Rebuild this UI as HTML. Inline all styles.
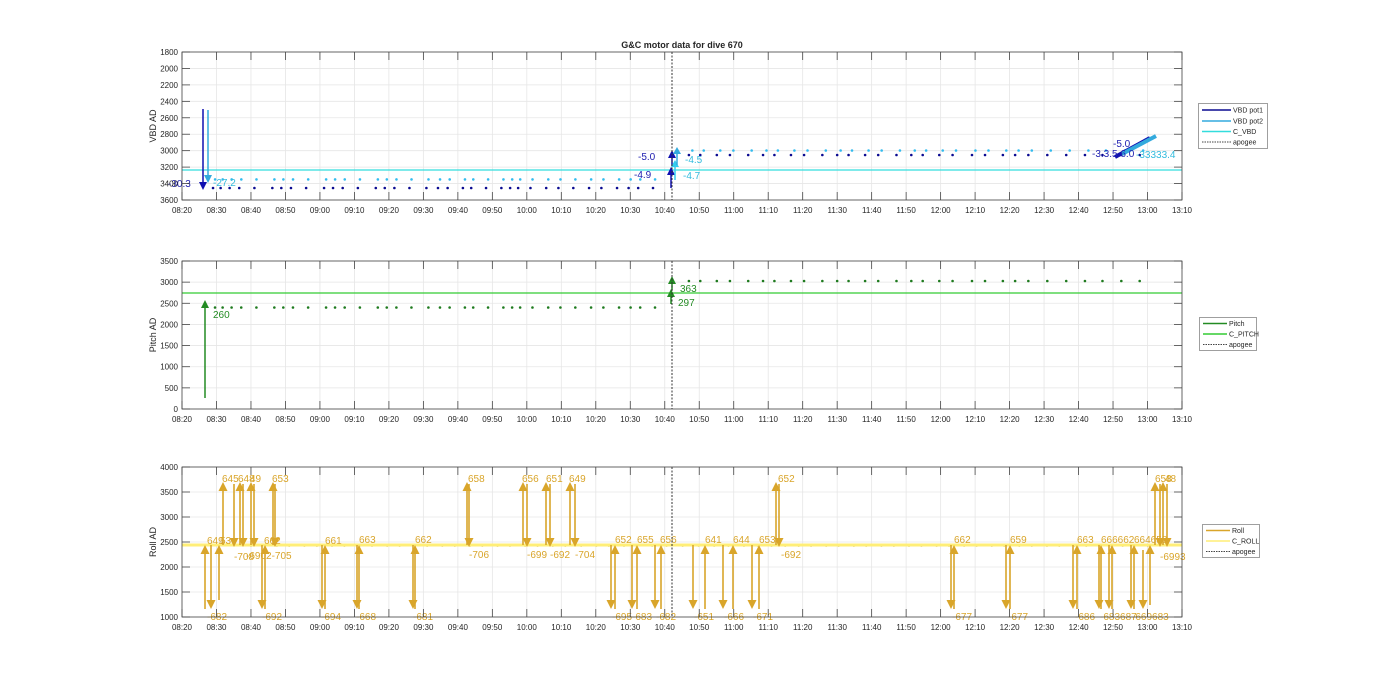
<!DOCTYPE html>
<html><head><meta charset="utf-8"><style>
html,body{margin:0;padding:0;background:#fff;}
svg{display:block;font-family:"Liberation Sans",sans-serif;}
.yl{font-size:8px;fill:#262626;text-anchor:end;}
.xl{font-size:8px;fill:#262626;text-anchor:middle;}
.ax{font-size:9px;fill:#262626;text-anchor:middle;}
.lg{font-size:7px;fill:#262626;}
.ro{font-size:10px;fill:#D9A52A;}
</style></head><body>
<svg id="s" width="1400" height="693" viewBox="0 0 1400 693" xmlns="http://www.w3.org/2000/svg">
<defs>
<marker id="mo" markerWidth="9" markerHeight="9" refX="7" refY="4.5" orient="auto" markerUnits="userSpaceOnUse" viewBox="0 0 9 9"><path d="M0,0 L9,4.5 L0,9 Z" fill="#D9A52A"/></marker>
</defs>
<g id="grid"></g>
<g id="dots"></g>
<!-- plot1 -->
<line x1="182" y1="170" x2="1182" y2="170" stroke="#33DDDD" stroke-width="1.2"/>
<text x="682" y="48" class="ax" font-weight="bold">G&amp;C motor data for dive 670</text>
<g stroke-width="1.5">
<line x1="203" y1="109" x2="203" y2="187" stroke="#1010B0"/><path d="M199,182 L207,182 L203,190Z" fill="#1010B0"/>
<line x1="208" y1="110" x2="208" y2="180" stroke="#33AADD"/><path d="M204,175 L212,175 L208,183Z" fill="#33AADD"/>
<line x1="671" y1="188" x2="671" y2="172" stroke="#1010B0"/><path d="M667,175 L675,175 L671,167Z" fill="#1010B0"/>
<line x1="672" y1="166" x2="672" y2="155" stroke="#1010B0"/><path d="M668,158 L676,158 L672,150Z" fill="#1010B0"/>
<line x1="675" y1="180" x2="675" y2="165" stroke="#33CCEE"/><path d="M671,167 L679,167 L675,160Z" fill="#33CCEE"/>
<line x1="677" y1="165" x2="677" y2="152" stroke="#33AADD"/><path d="M673,154 L681,154 L677,147Z" fill="#33AADD"/>
<line x1="1115" y1="157" x2="1150" y2="138" stroke="#1010B0" stroke-width="4"/>
<line x1="1122" y1="154" x2="1156" y2="136" stroke="#33AADD" stroke-width="4"/>
</g>
<text x="168" y="187" font-size="10" fill="#2020B0">-30.3</text>
<text x="213" y="186" font-size="10" fill="#33BBDD">-27.2</text>
<text x="638" y="160" font-size="10" fill="#2020B0">-5.0</text>
<text x="634" y="178" font-size="10" fill="#2020B0">-4.9</text>
<text x="685" y="163" font-size="10" fill="#33BBDD">-4.5</text>
<text x="683" y="179" font-size="10" fill="#33BBDD">-4.7</text>
<text x="1092" y="157" font-size="10" fill="#2020B0">-3.3.5.6.0</text>
<text x="1113" y="147" font-size="10" fill="#2020B0">-5.0</text>
<text x="1136" y="158" font-size="10" fill="#33BBDD">-33333.4</text>
<!-- plot2 -->
<line x1="182" y1="293" x2="1182" y2="293" stroke="#33CC33" stroke-width="1.2"/>
<line x1="205" y1="398" x2="205" y2="307" stroke="#238B23" stroke-width="1.5"/><path d="M201,308 L209,308 L205,300Z" fill="#238B23"/>
<line x1="671" y1="304" x2="671" y2="294" stroke="#238B23" stroke-width="1.5"/><path d="M667,297 L675,297 L671,289Z" fill="#238B23"/>
<line x1="672" y1="290" x2="672" y2="282" stroke="#238B23" stroke-width="1.5"/><path d="M668,284 L676,284 L672,276Z" fill="#238B23"/>
<text x="213" y="318" font-size="10" fill="#238B23">260</text>
<text x="680" y="292" font-size="10" fill="#238B23">363</text>
<text x="678" y="306" font-size="10" fill="#238B23">297</text>
<!-- plot3 -->
<line x1="182" y1="545" x2="1182" y2="545" stroke="#FFEE77" stroke-width="3"/>
<g stroke="#D9A52A" stroke-width="1.6" fill="none" marker-end="url(#mo)">
<line x1="205" y1="609" x2="205" y2="547"/><line x1="211" y1="545" x2="211" y2="607"/>
<line x1="219" y1="600" x2="219" y2="547"/>
<line x1="223" y1="545" x2="223" y2="484"/><line x1="234" y1="484" x2="234" y2="545"/>
<line x1="240" y1="545" x2="240" y2="484"/><line x1="243" y1="484" x2="243" y2="545"/>
<line x1="251" y1="545" x2="251" y2="484"/><line x1="254" y1="484" x2="254" y2="545"/>
<line x1="262" y1="545" x2="262" y2="607"/><line x1="265" y1="609" x2="265" y2="547"/>
<line x1="273" y1="545" x2="273" y2="484"/><line x1="275" y1="484" x2="275" y2="545"/>
<line x1="322" y1="545" x2="322" y2="607"/><line x1="325" y1="609" x2="325" y2="547"/>
<line x1="357" y1="545" x2="357" y2="607"/><line x1="359" y1="609" x2="359" y2="547"/>
<line x1="413" y1="545" x2="413" y2="607"/><line x1="415" y1="609" x2="415" y2="547"/>
<line x1="467" y1="545" x2="467" y2="484"/><line x1="469" y1="484" x2="469" y2="545"/>
<line x1="523" y1="545" x2="523" y2="484"/><line x1="527" y1="484" x2="527" y2="545"/>
<line x1="546" y1="545" x2="546" y2="484"/><line x1="550" y1="484" x2="550" y2="545"/>
<line x1="570" y1="545" x2="570" y2="484"/><line x1="575" y1="484" x2="575" y2="545"/>
<line x1="611" y1="545" x2="611" y2="607"/><line x1="615" y1="609" x2="615" y2="547"/>
<line x1="632" y1="545" x2="632" y2="607"/><line x1="637" y1="609" x2="637" y2="547"/>
<line x1="655" y1="545" x2="655" y2="607"/><line x1="661" y1="609" x2="661" y2="547"/>
<line x1="693" y1="545" x2="693" y2="607"/><line x1="705" y1="609" x2="705" y2="547"/>
<line x1="723" y1="545" x2="723" y2="607"/><line x1="733" y1="609" x2="733" y2="547"/>
<line x1="752" y1="545" x2="752" y2="607"/><line x1="759" y1="609" x2="759" y2="547"/>
<line x1="776" y1="545" x2="776" y2="484"/><line x1="779" y1="484" x2="779" y2="545"/>
<line x1="951" y1="545" x2="951" y2="607"/><line x1="954" y1="609" x2="954" y2="547"/>
<line x1="1006" y1="545" x2="1006" y2="607"/><line x1="1010" y1="609" x2="1010" y2="547"/>
<line x1="1073" y1="545" x2="1073" y2="607"/><line x1="1077" y1="609" x2="1077" y2="547"/>
<line x1="1099" y1="545" x2="1099" y2="607"/><line x1="1101" y1="609" x2="1101" y2="547"/>
<line x1="1109" y1="545" x2="1109" y2="607"/><line x1="1112" y1="609" x2="1112" y2="547"/>
<line x1="1131" y1="545" x2="1131" y2="607"/><line x1="1134" y1="609" x2="1134" y2="547"/>
<line x1="1143" y1="550" x2="1143" y2="607"/><line x1="1150" y1="605" x2="1150" y2="547"/>
<line x1="1155" y1="545" x2="1155" y2="484"/><line x1="1160" y1="484" x2="1160" y2="545"/>
<line x1="1163" y1="545" x2="1163" y2="484"/><line x1="1167" y1="484" x2="1167" y2="545"/>
</g>
<g class="ro">
<text x="207" y="544">649</text><text x="220" y="544">53</text><text x="222" y="482">645</text><text x="238" y="482">648</text><text x="250" y="482">49</text><text x="272" y="482">653</text>
<text x="234" y="560">-708</text><text x="246" y="559">-6902-705</text><text x="207" y="620">-682</text><text x="262" y="620">-692</text><text x="264" y="544">662</text>
<text x="325" y="544">661</text><text x="321" y="620">-694</text><text x="359" y="543">663</text><text x="356" y="620">-668</text><text x="415" y="543">662</text><text x="413" y="620">-681</text>
<text x="468" y="482">658</text><text x="469" y="558">-706</text><text x="522" y="482">656</text><text x="527" y="558">-699</text><text x="546" y="482">651</text><text x="550" y="558">-692</text><text x="569" y="482">649</text><text x="575" y="558">-704</text>
<text x="615" y="543">652</text><text x="612" y="620">-695</text><text x="637" y="543">655</text><text x="632" y="620">-683</text><text x="660" y="543">656</text><text x="656" y="620">-682</text>
<text x="705" y="543">641</text><text x="694" y="620">-651</text><text x="733" y="543">644</text><text x="724" y="620">-666</text><text x="759" y="543">653</text><text x="753" y="620">-671</text>
<text x="778" y="482">652</text><text x="781" y="558">-692</text><text x="954" y="543">662</text><text x="952" y="620">-677</text><text x="1010" y="543">659</text><text x="1008" y="620">-677</text>
<text x="1077" y="543">663</text><text x="1075" y="620">-686</text><text x="1101" y="543">666662</text><text x="1100" y="620">-683687</text><text x="1134" y="543">664658</text><text x="1132" y="620">-669683</text>
<text x="1155" y="482">658</text><text x="1165" y="482">48</text><text x="1160" y="560">-6993</text>
</g>
<line x1="672" y1="52" x2="672" y2="200" stroke="#333" stroke-dasharray="2,1.5" stroke-width="1"/>
<line x1="672" y1="261" x2="672" y2="409" stroke="#333" stroke-dasharray="2,1.5" stroke-width="1"/>
<line x1="672" y1="467" x2="672" y2="617" stroke="#333" stroke-dasharray="2,1.5" stroke-width="1"/>
<g id="frames"></g>
<g class="yl">
<text x="178" y="55">1800</text><text x="178" y="71.4">2000</text><text x="178" y="87.9">2200</text><text x="178" y="104.3">2400</text><text x="178" y="120.8">2600</text><text x="178" y="137.2">2800</text><text x="178" y="153.7">3000</text><text x="178" y="170.1">3200</text><text x="178" y="186.6">3400</text><text x="178" y="203">3600</text>
<text x="178" y="264">3500</text><text x="178" y="285.1">3000</text><text x="178" y="306.3">2500</text><text x="178" y="327.4">2000</text><text x="178" y="348.6">1500</text><text x="178" y="369.7">1000</text><text x="178" y="390.9">500</text><text x="178" y="412">0</text>
<text x="178" y="470">4000</text><text x="178" y="495">3500</text><text x="178" y="520">3000</text><text x="178" y="545">2500</text><text x="178" y="570">2000</text><text x="178" y="595">1500</text><text x="178" y="620">1000</text>
</g>
<text class="ax" transform="translate(156,126) rotate(-90)">VBD AD</text>
<text class="ax" transform="translate(156,335) rotate(-90)">Pitch AD</text>
<text class="ax" transform="translate(156,542) rotate(-90)">Roll AD</text>
<g class="xl">
<text x="182" y="213">08:20</text><text x="216.5" y="213">08:30</text><text x="251" y="213">08:40</text><text x="285.4" y="213">08:50</text><text x="319.9" y="213">09:00</text><text x="354.4" y="213">09:10</text><text x="388.9" y="213">09:20</text><text x="423.4" y="213">09:30</text><text x="457.9" y="213">09:40</text><text x="492.3" y="213">09:50</text><text x="526.8" y="213">10:00</text><text x="561.3" y="213">10:10</text><text x="595.8" y="213">10:20</text><text x="630.3" y="213">10:30</text><text x="664.8" y="213">10:40</text><text x="699.2" y="213">10:50</text><text x="733.7" y="213">11:00</text><text x="768.2" y="213">11:10</text><text x="802.7" y="213">11:20</text><text x="837.2" y="213">11:30</text><text x="871.7" y="213">11:40</text><text x="906.1" y="213">11:50</text><text x="940.6" y="213">12:00</text><text x="975.1" y="213">12:10</text><text x="1009.6" y="213">12:20</text><text x="1044.1" y="213">12:30</text><text x="1078.6" y="213">12:40</text><text x="1113" y="213">12:50</text><text x="1147.5" y="213">13:00</text><text x="1182" y="213">13:10</text>
</g>
<g class="xl">
<text x="182" y="422">08:20</text><text x="216.5" y="422">08:30</text><text x="251" y="422">08:40</text><text x="285.4" y="422">08:50</text><text x="319.9" y="422">09:00</text><text x="354.4" y="422">09:10</text><text x="388.9" y="422">09:20</text><text x="423.4" y="422">09:30</text><text x="457.9" y="422">09:40</text><text x="492.3" y="422">09:50</text><text x="526.8" y="422">10:00</text><text x="561.3" y="422">10:10</text><text x="595.8" y="422">10:20</text><text x="630.3" y="422">10:30</text><text x="664.8" y="422">10:40</text><text x="699.2" y="422">10:50</text><text x="733.7" y="422">11:00</text><text x="768.2" y="422">11:10</text><text x="802.7" y="422">11:20</text><text x="837.2" y="422">11:30</text><text x="871.7" y="422">11:40</text><text x="906.1" y="422">11:50</text><text x="940.6" y="422">12:00</text><text x="975.1" y="422">12:10</text><text x="1009.6" y="422">12:20</text><text x="1044.1" y="422">12:30</text><text x="1078.6" y="422">12:40</text><text x="1113" y="422">12:50</text><text x="1147.5" y="422">13:00</text><text x="1182" y="422">13:10</text>
</g>
<g class="xl">
<text x="182" y="630">08:20</text><text x="216.5" y="630">08:30</text><text x="251" y="630">08:40</text><text x="285.4" y="630">08:50</text><text x="319.9" y="630">09:00</text><text x="354.4" y="630">09:10</text><text x="388.9" y="630">09:20</text><text x="423.4" y="630">09:30</text><text x="457.9" y="630">09:40</text><text x="492.3" y="630">09:50</text><text x="526.8" y="630">10:00</text><text x="561.3" y="630">10:10</text><text x="595.8" y="630">10:20</text><text x="630.3" y="630">10:30</text><text x="664.8" y="630">10:40</text><text x="699.2" y="630">10:50</text><text x="733.7" y="630">11:00</text><text x="768.2" y="630">11:10</text><text x="802.7" y="630">11:20</text><text x="837.2" y="630">11:30</text><text x="871.7" y="630">11:40</text><text x="906.1" y="630">11:50</text><text x="940.6" y="630">12:00</text><text x="975.1" y="630">12:10</text><text x="1009.6" y="630">12:20</text><text x="1044.1" y="630">12:30</text><text x="1078.6" y="630">12:40</text><text x="1113" y="630">12:50</text><text x="1147.5" y="630">13:00</text><text x="1182" y="630">13:10</text>
</g>
<rect x="1198.5" y="103.5" width="69" height="45" fill="#fff" stroke="#888" stroke-width="0.8"/>
<line x1="1202" y1="110" x2="1231" y2="110" stroke="#0A0A90" stroke-width="1.5"/><text x="1233" y="112.5" class="lg">VBD pot1</text>
<line x1="1202" y1="121" x2="1231" y2="121" stroke="#33AADD" stroke-width="1.5"/><text x="1233" y="123.5" class="lg">VBD pot2</text>
<line x1="1202" y1="131.5" x2="1231" y2="131.5" stroke="#33DDDD" stroke-width="1.5"/><text x="1233" y="134" class="lg">C_VBD</text>
<line x1="1202" y1="142" x2="1231" y2="142" stroke="#444" stroke-dasharray="1.5,1"/><text x="1233" y="144.5" class="lg">apogee</text>
<rect x="1199.5" y="317.5" width="57" height="33" fill="#fff" stroke="#888" stroke-width="0.8"/>
<line x1="1203" y1="323.5" x2="1227" y2="323.5" stroke="#238B23" stroke-width="1.5"/><text x="1229" y="326" class="lg">Pitch</text>
<line x1="1203" y1="334" x2="1227" y2="334" stroke="#33CC33" stroke-width="1.5"/><text x="1229" y="336.5" class="lg">C_PITCH</text>
<line x1="1203" y1="344.5" x2="1227" y2="344.5" stroke="#444" stroke-dasharray="1.5,1"/><text x="1229" y="347" class="lg">apogee</text>
<rect x="1202.5" y="524.5" width="57" height="33" fill="#fff" stroke="#888" stroke-width="0.8"/>
<line x1="1206" y1="530.5" x2="1230" y2="530.5" stroke="#D9A52A" stroke-width="1.5"/><text x="1232" y="533" class="lg">Roll</text>
<line x1="1206" y1="541" x2="1230" y2="541" stroke="#FFEE77" stroke-width="1.5"/><text x="1232" y="543.5" class="lg">C_ROLL</text>
<line x1="1206" y1="551.5" x2="1230" y2="551.5" stroke="#444" stroke-dasharray="1.5,1"/><text x="1232" y="554" class="lg">apogee</text>
</svg>
<script>
(function(){
var NS="http://www.w3.org/2000/svg",g=document.getElementById('grid'),d=document.getElementById('dots'),f=document.getElementById('frames');
function el(p,t,a){var e=document.createElementNS(NS,t);for(var k in a)e.setAttribute(k,a[k]);p.appendChild(e);return e;}
var P=[[52,200,9],[261,409,7],[467,617,6]];
P.forEach(function(p){
 for(var i=0;i<=29;i++){var x=182+i*1000/29;el(g,'line',{x1:x,x2:x,y1:p[0],y2:p[1],stroke:'#e6e6e6','stroke-width':0.8});
  el(f,'line',{x1:x,x2:x,y1:p[1],y2:p[1]-8,stroke:'#444','stroke-width':0.8});el(f,'line',{x1:x,x2:x,y1:p[0],y2:p[0]+8,stroke:'#444','stroke-width':0.8});}
 for(var j=0;j<=p[2];j++){var y=p[0]+j*(p[1]-p[0])/p[2];el(g,'line',{x1:182,x2:1182,y1:y,y2:y,stroke:'#e6e6e6','stroke-width':0.8});
  el(f,'line',{x1:182,x2:190,y1:y,y2:y,stroke:'#444','stroke-width':0.8});el(f,'line',{x1:1174,x2:1182,y1:y,y2:y,stroke:'#444','stroke-width':0.8});}
 el(f,'rect',{x:182,y:p[0],width:1000,height:p[1]-p[0],fill:'none',stroke:'#444','stroke-width':0.8});
});
function X(t){return 182+t*1000/290;}
function dot(x,y,c){el(d,'circle',{cx:x,cy:y,r:1.3,fill:c});}
for(var t=9;t<140;t+=2.2+((t*7)%3)){dot(X(t),188,'#0A0A90');dot(X(t+0.6),179.4,'#33BBEE');dot(X(t)+2,307.5,'#1E7A1E');}
for(var t=147;t<282;t+=3.3+((t*5)%2.5)){dot(X(t),155,'#0A0A90');dot(X(t+1),150.5,'#33BBEE');dot(X(t),281,'#1E7A1E');}
for(var t=20;t<282;t+=3.1+((t*3)%2)){dot(X(t),545.5,'#C8B040');}
})();
</script>
</body></html>
